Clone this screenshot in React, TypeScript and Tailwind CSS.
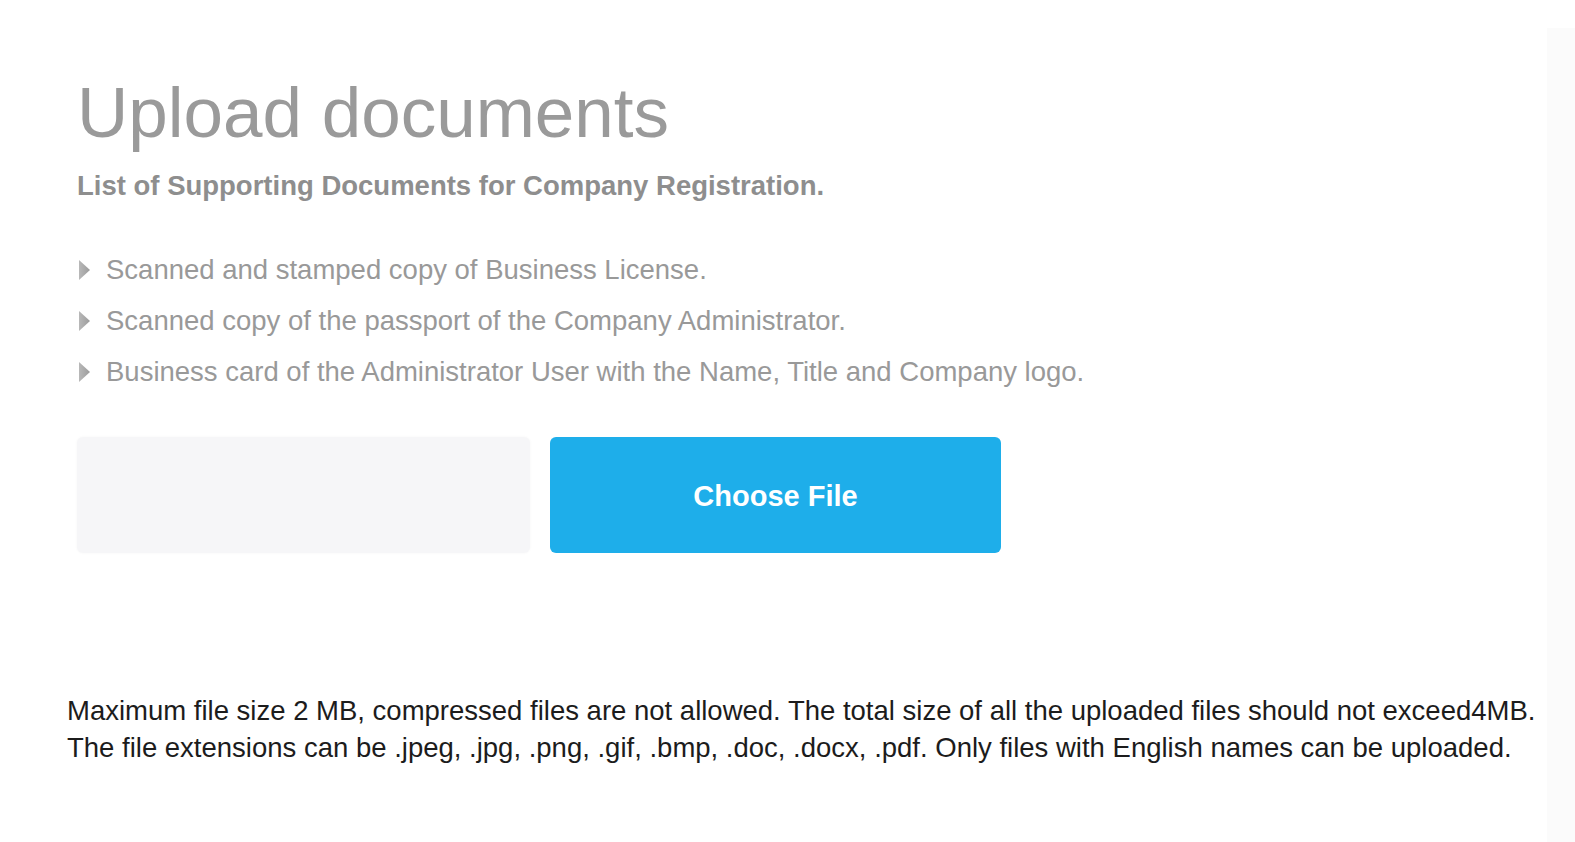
import React from "react";

const items = [
  "Scanned and stamped copy of Business License.",
  "Scanned copy of the passport of the Company Administrator.",
  "Business card of the Administrator User with the Name, Title and Company logo.",
];

function Arrow() {
  return (
    <svg width="13" height="22" viewBox="0 0 13 22" className="shrink-0">
      <defs>
        <linearGradient id="ag" x1="0" y1="0" x2="1" y2="0">
          <stop offset="0" stopColor="#b8b8b8" />
          <stop offset="1" stopColor="#9c9c9c" />
        </linearGradient>
      </defs>
      <path d="M1 1 L12 11 L1 21 Z" fill="url(#ag)" />
    </svg>
  );
}

export default function App() {
  return (
    <div
      className="relative w-[1575px] h-[842px] bg-white overflow-hidden"
      style={{ fontFamily: '"Liberation Sans", Arial, sans-serif' }}
    >
      <div className="absolute right-0 top-[28px] bottom-0 w-[28px] bg-[#fbfbfb]" />
      <div className="relative flex flex-col">
        <div className="pl-[77px] pt-[77px]">
          <h1 className="text-[71px] leading-none text-[#9a9a9a] font-normal">Upload documents</h1>
          <p className="mt-[24px] text-[27.5px] leading-none font-bold text-[#8e8e8e]">
            List of Supporting Documents for Company Registration.
          </p>
          <ul className="mt-[55px] flex flex-col gap-[21px]">
            {items.map((t) => (
              <li key={t} className="flex items-center gap-[15px] h-[30px] pl-[1px]">
                <Arrow />
                <span className="text-[27.5px] leading-none text-[#999999]">{t}</span>
              </li>
            ))}
          </ul>
          <div className="mt-[50px] flex gap-[20px]">
            <div className="w-[453px] h-[116px] rounded-[6px] bg-[#f6f6f8] shadow-[0_0_3px_rgba(0,0,0,0.04)]" />
            <button className="w-[451px] h-[116px] pt-[4px] rounded-[6px] bg-[#1eaeea] text-white text-[29px] font-bold flex items-center justify-center">
              Choose File
            </button>
          </div>
        </div>
        <div className="pl-[67px] mt-[139px] text-[27.5px] leading-[37px] text-[#1c1c1c]">
          <p>Maximum file size 2 MB, compressed files are not allowed. The total size of all the uploaded files should not exceed4MB.</p>
          <p>The file extensions can be .jpeg, .jpg, .png, .gif, .bmp, .doc, .docx, .pdf. Only files with English names can be uploaded.</p>
        </div>
      </div>
    </div>
  );
}
